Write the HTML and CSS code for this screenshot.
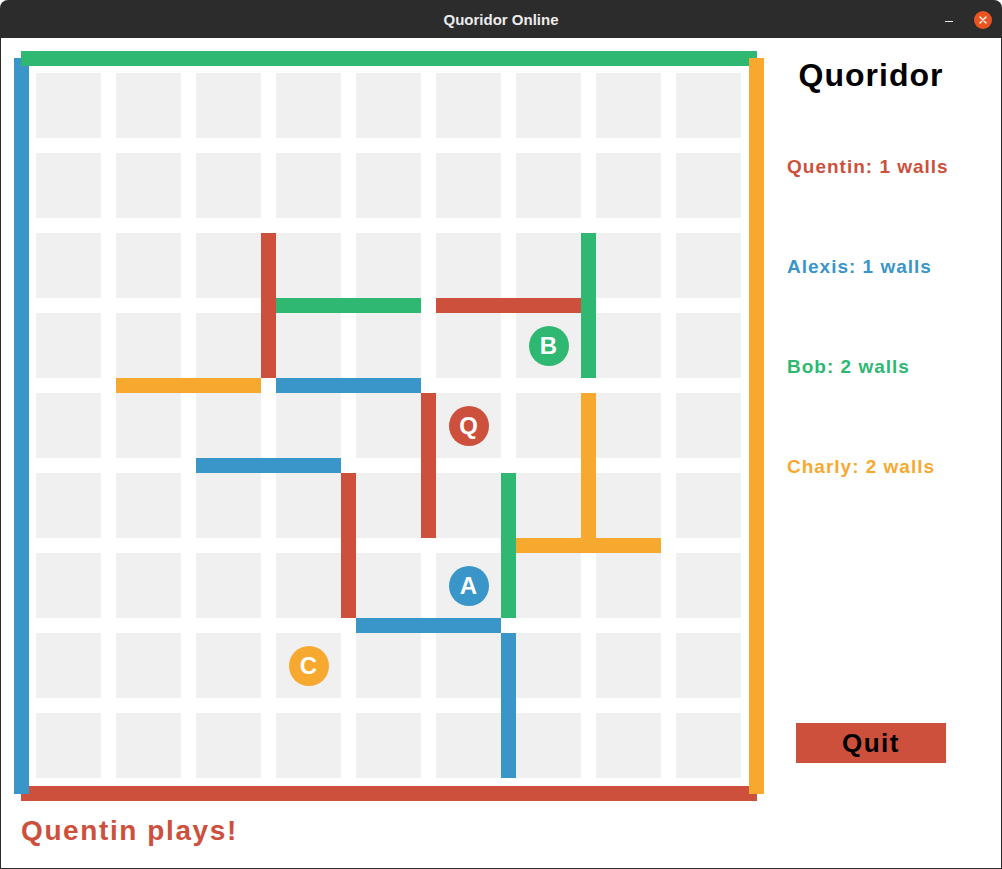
FILE: index.html
```html
<!DOCTYPE html>
<html lang="en">
<head>
<meta charset="utf-8">
<title>Quoridor Online</title>
<link rel="stylesheet" href="styles.css">
</head>
<body>
<div class="window">
  <header class="titlebar">
    <span class="title">Quoridor Online</span>
    <div class="controls">
      <span class="minimize"></span>
      <span class="close"><svg width="8" height="8" viewBox="0 0 8 8"><path d="M1 1 L7 7 M7 1 L1 7" stroke="#fff" stroke-width="1.4" stroke-linecap="round"/></svg></span>
    </div>
  </header>
  <main class="content">
    <section class="game">
      <div class="board">
        <div class="cells">
          <div class="cell"></div><div class="cell"></div><div class="cell"></div><div class="cell"></div><div class="cell"></div><div class="cell"></div><div class="cell"></div><div class="cell"></div><div class="cell"></div>
          <div class="cell"></div><div class="cell"></div><div class="cell"></div><div class="cell"></div><div class="cell"></div><div class="cell"></div><div class="cell"></div><div class="cell"></div><div class="cell"></div>
          <div class="cell"></div><div class="cell"></div><div class="cell"></div><div class="cell"></div><div class="cell"></div><div class="cell"></div><div class="cell"></div><div class="cell"></div><div class="cell"></div>
          <div class="cell"></div><div class="cell"></div><div class="cell"></div><div class="cell"></div><div class="cell"></div><div class="cell"></div><div class="cell"><span class="pawn green">B</span></div><div class="cell"></div><div class="cell"></div>
          <div class="cell"></div><div class="cell"></div><div class="cell"></div><div class="cell"></div><div class="cell"></div><div class="cell"><span class="pawn red">Q</span></div><div class="cell"></div><div class="cell"></div><div class="cell"></div>
          <div class="cell"></div><div class="cell"></div><div class="cell"></div><div class="cell"></div><div class="cell"></div><div class="cell"></div><div class="cell"></div><div class="cell"></div><div class="cell"></div>
          <div class="cell"></div><div class="cell"></div><div class="cell"></div><div class="cell"></div><div class="cell"></div><div class="cell"><span class="pawn blue">A</span></div><div class="cell"></div><div class="cell"></div><div class="cell"></div>
          <div class="cell"></div><div class="cell"></div><div class="cell"></div><div class="cell"><span class="pawn orange">C</span></div><div class="cell"></div><div class="cell"></div><div class="cell"></div><div class="cell"></div><div class="cell"></div>
          <div class="cell"></div><div class="cell"></div><div class="cell"></div><div class="cell"></div><div class="cell"></div><div class="cell"></div><div class="cell"></div><div class="cell"></div><div class="cell"></div>
        </div>

        <div class="wall bg-red" style="grid-column: 9; grid-row: 8 / span 3;"></div>
        <div class="wall bg-green" style="grid-row: 9; grid-column: 10 / span 3;"></div>
        <div class="wall bg-red" style="grid-row: 9; grid-column: 14 / span 3;"></div>
        <div class="wall bg-green" style="grid-column: 17; grid-row: 8 / span 3;"></div>
        <div class="wall bg-orange" style="grid-row: 11; grid-column: 6 / span 3;"></div>
        <div class="wall bg-blue" style="grid-row: 11; grid-column: 10 / span 3;"></div>
        <div class="wall bg-red" style="grid-column: 13; grid-row: 12 / span 3;"></div>
        <div class="wall bg-orange" style="grid-column: 17; grid-row: 12 / span 3;"></div>
        <div class="wall bg-blue" style="grid-row: 13; grid-column: 8 / span 3;"></div>
        <div class="wall bg-red" style="grid-column: 11; grid-row: 14 / span 3;"></div>
        <div class="wall bg-green" style="grid-column: 15; grid-row: 14 / span 3;"></div>
        <div class="wall bg-orange" style="grid-row: 15; grid-column: 16 / span 3;"></div>
        <div class="wall bg-blue" style="grid-row: 17; grid-column: 12 / span 3;"></div>
        <div class="wall bg-blue" style="grid-column: 15; grid-row: 18 / span 3;"></div>

        <div class="wall edge-bottom bg-red"></div>
        <div class="wall edge-left bg-blue"></div>
        <div class="wall edge-top bg-green"></div>
        <div class="wall edge-right bg-orange"></div>
      </div>
      <p class="status fg-red">Quentin plays!</p>
    </section>
    <aside class="panel">
      <h1 class="panel-title">Quoridor</h1>
      <p class="player fg-red">Quentin: 1 walls</p>
      <p class="player fg-blue">Alexis: 1 walls</p>
      <p class="player fg-green">Bob: 2 walls</p>
      <p class="player fg-orange">Charly: 2 walls</p>
      <button class="quit" type="button">Quit</button>
    </aside>
  </main>
</div>
</body>
</html>
```

FILE: styles.css
```css
* { box-sizing: border-box; }

html, body {
  margin: 0;
  padding: 0;
  background: #ffffff;
}

body {
  font-family: "Liberation Sans", Arial, sans-serif;
}

.window {
  width: 1002px;
  height: 869px;
  display: flex;
  flex-direction: column;
}

.titlebar {
  height: 38px;
  flex: none;
  background: #2c2c2c;
  border-radius: 8px 8px 0 0;
  display: grid;
  grid-template-columns: 1fr auto 1fr;
  align-items: center;
}

.title {
  grid-column: 2;
  color: #ececec;
  font-family: "Liberation Sans", Arial, sans-serif;
  font-weight: bold;
  font-size: 15px;
  line-height: 18px;
  padding-top: 2px;
}

.controls {
  grid-column: 3;
  justify-self: end;
  display: flex;
  align-items: center;
  gap: 21px;
  padding-right: 10px;
  padding-top: 2px;
}

.minimize {
  display: block;
  width: 8px;
  height: 1.5px;
  background: #e8e8e8;
  margin-top: 3px;
}

.close {
  width: 18px;
  height: 18px;
  border-radius: 50%;
  background: #e95420;
  display: flex;
  align-items: center;
  justify-content: center;
}

.close svg { display: block; }

.content {
  flex: 1;
  display: flex;
  border: 1px solid #2c2c2c;
  border-top: none;
  background: #ffffff;
}

.game {
  padding: 13px 0 0 13px;
  display: flex;
  flex-direction: column;
}

.board {
  width: 750px;
  height: 750px;
  display: grid;
  grid-template-columns: 7px 8px 7px repeat(8, 65px 15px) 65px 8px 8px 7px;
  grid-template-rows: 7px 8px 7px repeat(8, 65px 15px) 65px 8px 8px 7px;
}

.cells {
  grid-row: 4 / 21;
  grid-column: 4 / 21;
  display: grid;
  grid-template-columns: repeat(9, 65px);
  grid-template-rows: repeat(9, 65px);
  gap: 15px;
}

.cell {
  background: #f0f0f0;
  display: flex;
  align-items: center;
  justify-content: center;
}

.pawn {
  width: 40px;
  height: 40px;
  border-radius: 50%;
  display: flex;
  align-items: center;
  justify-content: center;
  color: #ffffff;
  font-weight: bold;
  font-size: 24px;
  line-height: 1;
}

.pawn.red { background: #cd503d; }
.pawn.blue { background: #3a96c8; }
.pawn.green { background: #2eb872; }
.pawn.orange { background: #f7a92f; }

.wall { display: block; }

.bg-red { background: #cd503d; }
.bg-blue { background: #3a96c8; }
.bg-green { background: #2eb872; }
.bg-orange { background: #f7a92f; }

.fg-red { color: #cd503d; }
.fg-blue { color: #3a96c8; }
.fg-green { color: #2eb872; }
.fg-orange { color: #f7a92f; }

.edge-bottom { grid-row: 22 / 24; grid-column: 2 / 23; }
.edge-left { grid-column: 1 / 3; grid-row: 2 / 23; }
.edge-top { grid-row: 1 / 3; grid-column: 2 / 23; }
.edge-right { grid-column: 22 / 24; grid-row: 2 / 23; }

.status {
  margin: 14px 0 0 7px;
  font-weight: bold;
  font-size: 28px;
  line-height: 32px;
  letter-spacing: 1.6px;
}

.panel {
  margin-left: 23px;
  width: 168px;
  display: flex;
  flex-direction: column;
}

.panel-title {
  margin: 19px 0 0;
  font-size: 32px;
  line-height: 36px;
  font-weight: bold;
  letter-spacing: 1px;
  text-align: center;
  color: #000000;
}

.player {
  margin: 76px 0 0;
  font-size: 19px;
  line-height: 24px;
  font-weight: bold;
  letter-spacing: 1px;
  white-space: nowrap;
}

.panel-title + .player { margin-top: 62px; }

.quit {
  margin-top: 244px;
  align-self: center;
  width: 150px;
  height: 40px;
  padding: 0;
  border: none;
  background: #cd503d;
  color: #000000;
  font-family: "Liberation Sans", Arial, sans-serif;
  font-weight: bold;
  font-size: 26px;
  line-height: 40px;
  letter-spacing: 1.5px;
}
```
